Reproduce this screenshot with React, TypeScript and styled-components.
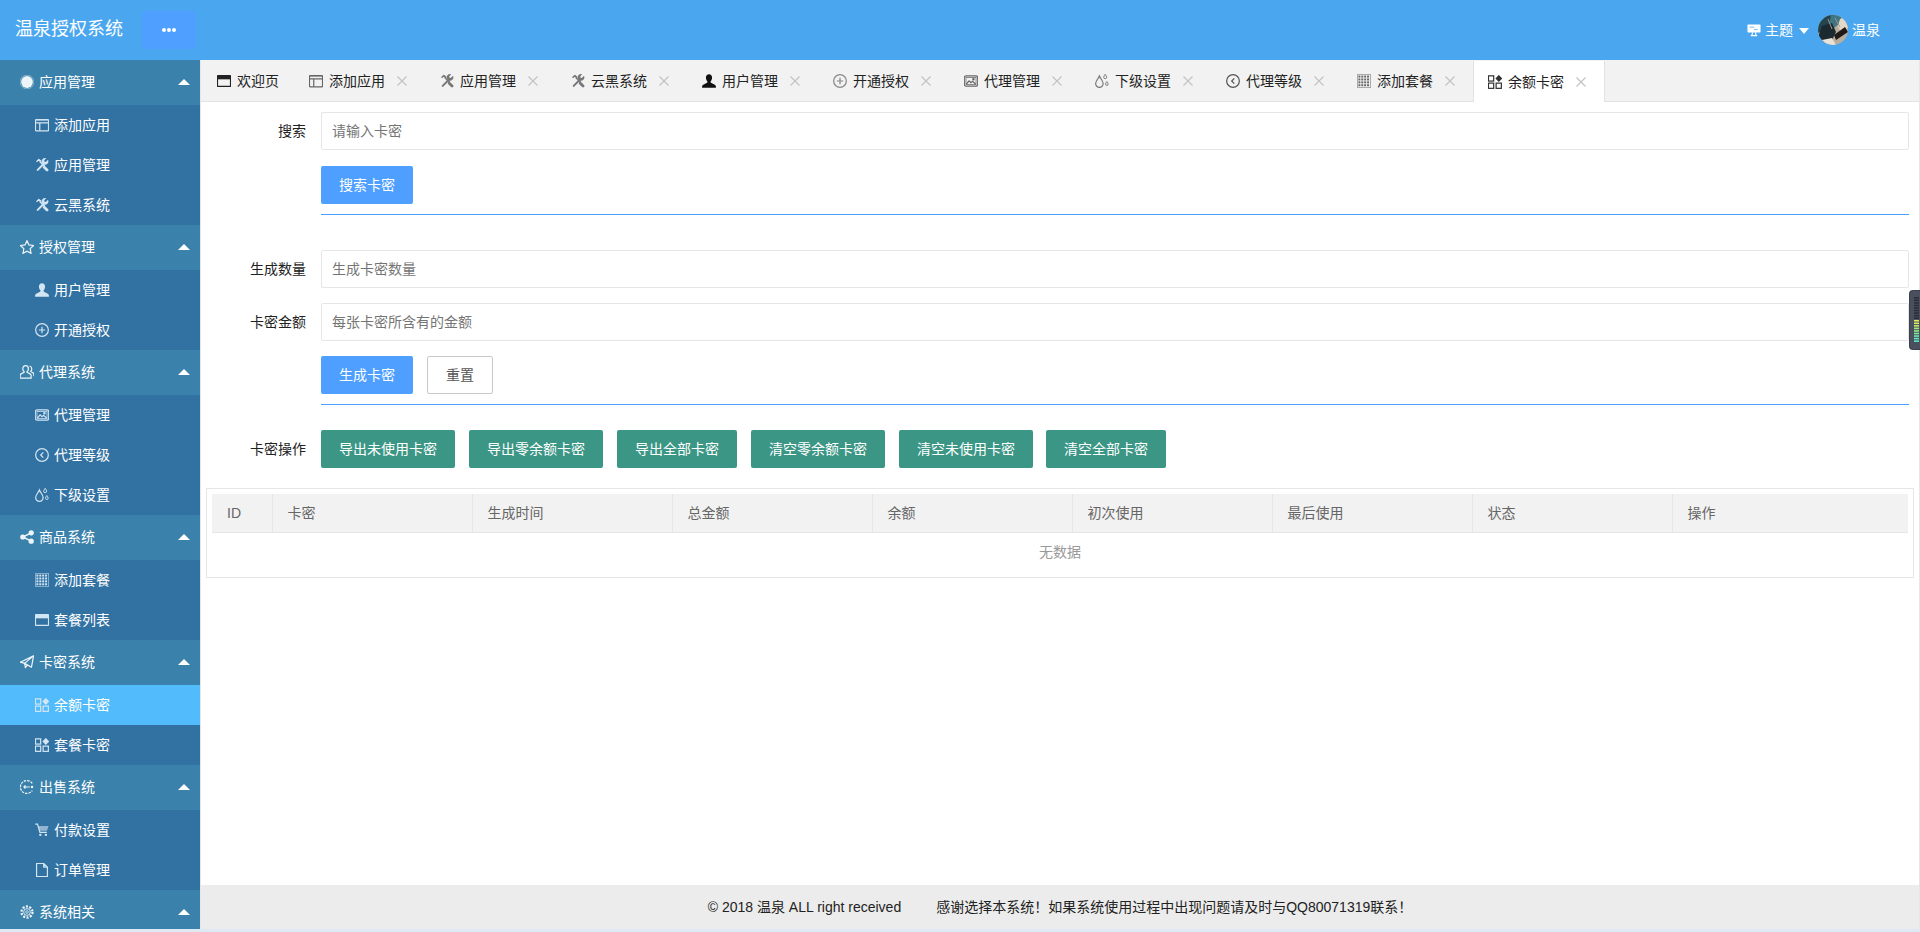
import React from "react";
import styled, { createGlobalStyle } from "styled-components";

const Global = createGlobalStyle`
  html, body { margin: 0; padding: 0; height: 932px; overflow: hidden; background: #dfe8f5; }
  body { font: 14px/20px "Liberation Sans", "Noto Sans CJK SC", sans-serif; color: #333; }
  * { box-sizing: border-box; }
  input::placeholder { color: #757575; opacity: 1; }
`;

type Kind =
  | "dot" | "window" | "browser" | "tools" | "star" | "user" | "plus" | "agents" | "picture"
  | "back" | "drops" | "share" | "grid" | "plane" | "apps" | "exit" | "cart" | "file" | "gear" | "board";

const Svg = styled.svg`
  flex: none;
  display: block;
  width: 14px;
  height: 14px;
`;

const gridCells: number[][] = [];
for (let r = 0; r < 4; r++) for (let c = 0; c < 4; c++) gridCells.push([2 + c * 3.1, 2.2 + r * 3.1]);

const Glyph = ({ kind }: { kind: Kind }) => {
  const stroke = { fill: "none", stroke: "currentColor", strokeWidth: 1.3 };
  let body: React.ReactNode = null;
  switch (kind) {
    case "tools":
      body = (
        <>
          <path d="M3.4 13.2l7.6-7.6" stroke="currentColor" strokeWidth="2.2" strokeLinecap="round" fill="none" />
          <path
            d="M14.2 2.6l-2.2 2.2-1.3-.4-.4-1.3L12.5.9a3.5 3.5 0 00-4.6 4.5l1.9 1.9a3.5 3.5 0 004.7-4.6z"
            fill="currentColor"
          />
          <path d="M2.2 4.6L4.6 2.2l2 1.6-.7.7 5 5" stroke="currentColor" strokeWidth="1.6" fill="none" strokeLinejoin="round" />
          <path d="M10.4 10.4l3 3" stroke="currentColor" strokeWidth="3" strokeLinecap="round" fill="none" />
        </>
      );
      break;
    case "dot":
      body = (
        <>
          <circle cx="8" cy="8" r="7.4" fill="none" stroke="currentColor" strokeOpacity=".45" strokeWidth="1" />
          <circle cx="8" cy="8" r="6.3" fill="currentColor" />
        </>
      );
      break;
    case "window":
      body = (
        <g {...stroke}>
          <rect x="1" y="2.2" width="14" height="12" rx=".6" />
          <path d="M1 5.8h14M5.6 5.8v8.4" />
          <path d="M1 3h14" strokeOpacity=".5" />
        </g>
      );
      break;
    case "browser":
      body = (
        <>
          <rect x="1" y="2.2" width="14" height="11.6" rx=".6" {...stroke} />
          <rect x="1" y="2.2" width="14" height="4" fill="currentColor" />
        </>
      );
      break;
    case "star":
      body = <path d="M8 1.2l2.1 4.6 4.9.6-3.6 3.4.9 5L8 12.4l-4.3 2.4.9-5L1 6.4l4.9-.6z" {...stroke} />;
      break;
    case "user":
      body = (
        <path
          d="M8 .8c2 0 3.3 1.5 3.3 3.7 0 1.6-.8 3-1.5 3.9-.3.4-.2 1.1.3 1.4l4.1 2.2c.8.4 1.2 1 1.2 1.8v1.4H.6v-1.4c0-.8.4-1.4 1.2-1.8l4.1-2.2c.5-.3.6-1 .3-1.4-.7-.9-1.5-2.3-1.5-3.9C4.7 2.3 6 .8 8 .8z"
          fill="currentColor"
        />
      );
      break;
    case "plus":
      body = (
        <g {...stroke}>
          <circle cx="8" cy="8" r="6.8" />
          <path d="M8 4.6v6.8M4.6 8h6.8" />
        </g>
      );
      break;
    case "agents":
      body = (
        <g {...stroke}>
          <path d="M6.5 1.2c1.9 0 3 1.4 3 3.2 0 1.3-.6 2.5-1.3 3.1-.3.3-.2.8.2 1l3 1.5c.7.4 1 .9 1 1.7v2.9H.6v-2.9c0-.8.3-1.3 1-1.7l3-1.5c.4-.2.5-.7.2-1-.7-.6-1.3-1.8-1.3-3.1 0-1.8 1.1-3.2 3-3.2z" />
          <path d="M10.8 1.6c1.6.4 2.3 1.6 2.3 3 0 1.2-.5 2.2-1.1 2.8l2.2 1.3c.7.4 1.2 1 1.2 1.9v2" />
        </g>
      );
      break;
    case "picture":
      body = (
        <g {...stroke}>
          <rect x=".8" y="2.4" width="14.4" height="11.2" rx="2" />
          <rect x="2.6" y="4.2" width="10.8" height="7.6" strokeWidth=".8" />
          <path d="M3 11.2l3-3.4 2 2 1.6-1.4 3.4 2.8" />
          <circle cx="10.6" cy="6.2" r=".7" />
        </g>
      );
      break;
    case "back":
      body = (
        <g {...stroke}>
          <circle cx="8" cy="8" r="6.8" />
          <path d="M9.4 5.2L6.6 8l2.8 2.8" />
        </g>
      );
      break;
    case "drops":
      body = (
        <g {...stroke}>
          <path d="M5.2 2.6c1.1 3 4 5 4 8.2a4 4 0 01-8 0c0-3.2 2.9-5.2 4-8.2z" />
          <path d="M11.4.8c.5 1.1 1.6 1.9 1.6 3.1a1.6 1.6 0 01-3.2 0c0-1.2 1.1-2 1.6-3.1z" strokeWidth="1" />
          <path d="M13.2 8.6c.5.9 1.4 1.7 1.4 2.8a1.4 1.4 0 01-2.8 0c0-1.1.9-1.9 1.4-2.8z" strokeWidth="1" />
        </g>
      );
      break;
    case "share":
      body = (
        <>
          <path d="M12.5 3.5L3.5 8l9 4.5" fill="none" stroke="currentColor" strokeWidth="1.6" />
          <circle cx="12.5" cy="3.5" r="2.8" fill="currentColor" />
          <circle cx="3.5" cy="8" r="2.8" fill="currentColor" />
          <circle cx="12.5" cy="12.5" r="2.8" fill="currentColor" />
        </>
      );
      break;
    case "grid":
      body = (
        <>
          <rect x="1" y="1" width="14" height="14" fill="none" stroke="currentColor" strokeOpacity=".55" strokeWidth="1" />
          {gridCells.map(([x, y]) => (
            <rect key={`${x}-${y}`} x={x} y={y} width="2.1" height="2.1" fill="currentColor" />
          ))}
        </>
      );
      break;
    case "plane":
      body = (
        <g {...stroke} strokeLinejoin="round">
          <path d="M15 1.4L.8 8.2l4.6 1.3L15 1.4z" />
          <path d="M15 1.4l-2.2 12.2-7.4-4.1.9 4.6 2.2-3" />
        </g>
      );
      break;
    case "apps":
      body = (
        <>
          <g {...stroke}>
            <rect x="1" y="1.4" width="5.6" height="5.6" />
            <rect x="1" y="9.2" width="5.6" height="5.6" />
            <rect x="9.2" y="9.2" width="5.6" height="5.6" />
          </g>
          <path d="M12.1.4l3.7 3.8-3.7 3.8-3.7-3.8z" fill="currentColor" />
        </>
      );
      break;
    case "exit":
      body = (
        <g {...stroke}>
          <path d="M13.6 4.2A6.9 6.9 0 1013.6 11.8" strokeWidth="1.3" strokeDasharray="2.6 1.1" />
          <path d="M4.4 8h6.6M4.4 8l2-1.6M4.4 8l2 1.6" />
          <circle cx="13.4" cy="8" r=".7" fill="currentColor" />
        </g>
      );
      break;
    case "cart":
      body = (
        <>
          <path d="M.8 1.6h2.4l2.6 9h7.4" {...stroke} />
          <path d="M4 3.6h11l-1.6 5.2H5.4z" fill="currentColor" fillOpacity=".6" />
          <circle cx="6.2" cy="13.2" r="1.3" fill="currentColor" />
          <circle cx="12.2" cy="13.2" r="1.3" fill="currentColor" />
        </>
      );
      break;
    case "file":
      body = <path d="M2.2 1h7.6l4 4v10H2.2zM9.8 1v4h4" {...stroke} strokeLinejoin="round" />;
      break;
    case "gear":
      body = (
        <g {...stroke}>
          <circle cx="8" cy="8" r="5.9" strokeWidth="2.4" strokeDasharray="2.2 1.5" />
          <circle cx="8" cy="8" r="3.6" strokeWidth="1" />
          <circle cx="8" cy="8" r="1.4" strokeWidth=".8" />
        </g>
      );
      break;
    case "board":
      body = (
        <>
          <rect x="1" y="2" width="14" height="8.6" rx=".8" fill="currentColor" />
          <path d="M3.4 5h5M8 7.4h4" stroke="#4aa7ef" strokeWidth=".8" />
          <path d="M6.6 10.6l-1 3.4M9.4 10.6l1 3.4M4.6 14h6.8" stroke="currentColor" strokeWidth="1.2" fill="none" />
        </>
      );
      break;
  }
  return <Svg viewBox="0.5 0.5 15 15">{body}</Svg>;
};

const Page = styled.div`
  width: 1920px;
  height: 929px;
  display: flex;
  flex-direction: column;
  overflow: hidden;
  position: relative;
`;

const TopBar = styled.header`
  flex: none;
  height: 60px;
  background: #4aa7ef;
  display: flex;
  align-items: center;
  padding: 0 40px 0 15px;
  color: #fff;
`;

const Brand = styled.div`
  font-size: 18px;
  line-height: 24px;
  width: 108px;
  white-space: nowrap;
  margin-top: -2px;
`;

const MenuToggle = styled.button`
  width: 54px;
  height: 38px;
  margin-left: 19px;
  border: none;
  border-radius: 2px;
  background: #4e9fff;
  display: flex;
  align-items: center;
  justify-content: center;
  gap: 1px;
  padding: 0;
`;

const Pip = styled.span`
  width: 4px;
  height: 4px;
  border-radius: 50%;
  background: #fff;
`;

const UserArea = styled.div`
  margin-left: auto;
  display: flex;
  align-items: center;
  font-size: 14px;
  white-space: nowrap;
`;

const ThemeLabel = styled.span`
  margin-left: 4px;
`;

const DownCaret = styled.i`
  width: 0;
  height: 0;
  margin: 2px 9px 0 6px;
  border-left: 5px solid transparent;
  border-right: 5px solid transparent;
  border-top: 6px solid #fff;
`;

const AvatarSvg = styled.svg`
  width: 30px;
  height: 30px;
  margin-right: 4px;
  display: block;
  border-radius: 50%;
`;

const Avatar = () => (
  <AvatarSvg viewBox="0 0 30 30">
    <rect width="30" height="30" fill="#b9ae9e" />
    <path d="M0 0h17l-3 9-6 6-8 3z" fill="#24444e" />
    <path d="M13 0h11l-2 8-6 5-5-3z" fill="#3f7684" />
    <path d="M4 11l10-3 4 9-4 8-9 3-5-6z" fill="#1b2a30" />
    <path d="M22 4l8-2v11l-7 4-3-6z" fill="#e3d8ca" />
    <path d="M16 20l11-8 3 5-12 8z" fill="#1f1a18" />
    <path d="M4 25l10-2 4 7H4z" fill="#e9e2d6" />
    <path d="M17 3l5 9M10 4l4 10" stroke="#a5958a" strokeWidth="1" />
  </AvatarSvg>
);

const Body = styled.div`
  flex: 1;
  min-height: 0;
  display: flex;
`;

const Sidebar = styled.nav`
  flex: none;
  width: 200px;
  background: #3272a3;
  overflow: hidden;
  color: #fff;
`;

const GroupHead = styled.div`
  height: 45px;
  background: #3a81ab;
  display: flex;
  align-items: center;
  gap: 5px;
  padding: 0 10px 1px 20px;
  color: #fff;
`;

const GroupIcon = styled.span`
  color: #eef5fa;
  display: block;
`;

const UpCaret = styled.i`
  margin-left: auto;
  width: 0;
  height: 0;
  border-left: 6px solid transparent;
  border-right: 6px solid transparent;
  border-bottom: 6px solid #fff;
`;

const SubList = styled.div`
  background: #3272a3;
  border-radius: 2px;
`;

const SubItem = styled.div<{ $active?: boolean }>`
  height: 40px;
  display: flex;
  align-items: center;
  gap: 5px;
  padding-left: 35px;
  background: ${(p) => (p.$active ? "#51bbfb" : "transparent")};
  color: #fff;
`;

const SubIcon = styled.span`
  color: #d2e5f2;
  display: block;
`;

const Main = styled.main`
  flex: 1;
  min-width: 0;
  background: #fff;
  border-left: 1px solid #e6e6e6;
  border-right: 1px solid #e6e6e6;
  display: flex;
  flex-direction: column;
  position: relative;
`;

const TabBar = styled.div`
  flex: none;
  height: 42px;
  background: #f2f2f2;
  border-bottom: 1px solid #e2e2e2;
  display: flex;
  padding-left: 1px;
  padding-top: 1px;
`;

const Tab = styled.div<{ $active?: boolean; $first?: boolean }>`
  width: ${(p) => (p.$first ? 92 : p.$active ? 132 : 131)}px;
  height: ${(p) => (p.$active ? 41 : 40)}px;
  display: flex;
  align-items: center;
  padding-left: 15px;
  color: #222;
  background: ${(p) => (p.$active ? "#fff" : "transparent")};
  box-shadow: ${(p) => (p.$active ? "inset 1px 0 #e2e2e2, inset -1px 0 #e2e2e2" : "none")};
  white-space: nowrap;
`;

const TabIcon = styled.span<{ $tone: string }>`
  color: ${(p) => p.$tone};
  display: block;
  margin-right: 6px;
`;

const CloseMark = styled.svg`
  width: 10px;
  height: 10px;
  margin-left: 12px;
  display: block;
  flex: none;
`;

const Content = styled.div`
  flex: 1;
  min-height: 0;
  padding: 10px 10px 0 0;
  display: flex;
  flex-direction: column;
`;

const Row = styled.div<{ $after?: number }>`
  display: flex;
  align-items: center;
  margin-bottom: ${(p) => p.$after ?? 15}px;
`;

const Label = styled.label`
  flex: none;
  width: 120px;
  padding-right: 15px;
  text-align: right;
  color: #222;
`;

const Indent = styled.div`
  flex: none;
  width: 120px;
`;

const Field = styled.input`
  flex: 1;
  min-width: 0;
  height: 38px;
  border: 1px solid #e6e6e6;
  border-radius: 2px;
  padding: 0 10px;
  background: #fff;
  font: inherit;
  color: #333;
  outline: none;
`;

const Buttons = styled.div`
  display: flex;
  gap: 14px;
`;

const OpButtons = styled(Buttons)`
  & > button:last-child {
    margin-left: -1px;
  }
`;

const Btn = styled.button<{ $tone?: "blue" | "green" | "plain" }>`
  height: 38px;
  padding: 0 18px;
  border-radius: 2px;
  font: inherit;
  white-space: nowrap;
  border: ${(p) => (p.$tone === "plain" ? "1px solid #c9c9c9" : "none")};
  background: ${(p) => (p.$tone === "plain" ? "#fff" : p.$tone === "green" ? "#3b9685" : "#4e9fff")};
  color: ${(p) => (p.$tone === "plain" ? "#555" : "#fff")};
`;

const Rule = styled.hr<{ $after: number }>`
  height: 1px;
  margin: -5px 0 ${(p) => p.$after}px 120px;
  border: none;
  background: #4e9fff;
`;

const TableBox = styled.div`
  margin: 5px -5px 0 5px;
  border: 1px solid #e6e6e6;
  padding: 5px 5px 0;
  height: 90px;
`;

const DataTable = styled.table`
  width: 100%;
  table-layout: fixed;
  border-collapse: collapse;
`;

const Th = styled.th<{ $w?: number }>`
  width: ${(p) => (p.$w ? `${p.$w}px` : "auto")};
  height: 38px;
  padding: 0 15px;
  text-align: left;
  font-weight: 400;
  color: #666;
  background: #f2f2f2;
  border-bottom: 1px solid #e6e6e6;
  border-left: 1px solid #e6e6e6;
  &:first-child {
    border-left: none;
  }
`;

const Empty = styled.td`
  height: 40px;
  text-align: center;
  color: #999;
`;

const Foot = styled.footer`
  flex: none;
  height: 44px;
  background: #ececec;
  display: flex;
  align-items: center;
  justify-content: center;
  gap: 35px;
  color: #222;
  margin-right: 0;
  font-size: 14px;
  white-space: nowrap;
`;

const Meter = styled.div`
  position: absolute;
  top: 231px;
  right: -1px;
  width: 10px;
  height: 58px;
  background: #4a4f5e;
  border-radius: 3px 0 0 3px;
  box-shadow: 0 0 0 1px #3c404c;
  padding: 6px 0 0 4px;
`;

const MeterBars = styled.svg`
  display: block;
  width: 5px;
  height: 46px;
`;

const meterColors = [
  "#2b2e38", "#2b2e38", "#2b2e38", "#2b2e38", "#2b2e38", "#2b2e38", "#2b2e38", "#2b2e38", "#2b2e38",
  "#e6e85a", "#d8ea60", "#c4ea6a", "#a8ea78", "#92ea88", "#7cea98", "#6aeaa8", "#5ceab8", "#52eac4",
];

const menu: { title: string; icon: Kind; items: { label: string; icon: Kind; active?: boolean }[] }[] = [
  {
    title: "应用管理",
    icon: "dot",
    items: [
      { label: "添加应用", icon: "window" },
      { label: "应用管理", icon: "tools" },
      { label: "云黑系统", icon: "tools" },
    ],
  },
  {
    title: "授权管理",
    icon: "star",
    items: [
      { label: "用户管理", icon: "user" },
      { label: "开通授权", icon: "plus" },
    ],
  },
  {
    title: "代理系统",
    icon: "agents",
    items: [
      { label: "代理管理", icon: "picture" },
      { label: "代理等级", icon: "back" },
      { label: "下级设置", icon: "drops" },
    ],
  },
  {
    title: "商品系统",
    icon: "share",
    items: [
      { label: "添加套餐", icon: "grid" },
      { label: "套餐列表", icon: "browser" },
    ],
  },
  {
    title: "卡密系统",
    icon: "plane",
    items: [
      { label: "余额卡密", icon: "apps", active: true },
      { label: "套餐卡密", icon: "apps" },
    ],
  },
  {
    title: "出售系统",
    icon: "exit",
    items: [
      { label: "付款设置", icon: "cart" },
      { label: "订单管理", icon: "file" },
    ],
  },
  { title: "系统相关", icon: "gear", items: [] },
];

const tabs: { label: string; icon: Kind; tone: string; first?: boolean; active?: boolean }[] = [
  { label: "欢迎页", icon: "browser", tone: "#222", first: true },
  { label: "添加应用", icon: "window", tone: "#666" },
  { label: "应用管理", icon: "tools", tone: "#777" },
  { label: "云黑系统", icon: "tools", tone: "#777" },
  { label: "用户管理", icon: "user", tone: "#111" },
  { label: "开通授权", icon: "plus", tone: "#888" },
  { label: "代理管理", icon: "picture", tone: "#666" },
  { label: "下级设置", icon: "drops", tone: "#777" },
  { label: "代理等级", icon: "back", tone: "#555" },
  { label: "添加套餐", icon: "grid", tone: "#666" },
  { label: "余额卡密", icon: "apps", tone: "#333", active: true },
];

const columns = ["ID", "卡密", "生成时间", "总金额", "余额", "初次使用", "最后使用", "状态", "操作"];
const actions = ["导出未使用卡密", "导出零余额卡密", "导出全部卡密", "清空零余额卡密", "清空未使用卡密", "清空全部卡密"];

export default function App() {
  return (
    <Page>
      <Global />
      <TopBar>
        <Brand>温泉授权系统</Brand>
        <MenuToggle aria-label="menu">
          <Pip />
          <Pip />
          <Pip />
        </MenuToggle>
        <UserArea>
          <Glyph kind="board" />
          <ThemeLabel>主题</ThemeLabel>
          <DownCaret />
          <Avatar />
          <span>温泉</span>
        </UserArea>
      </TopBar>
      <Body>
        <Sidebar>
          {menu.map((g) => (
            <div key={g.title}>
              <GroupHead>
                <GroupIcon>
                  <Glyph kind={g.icon} />
                </GroupIcon>
                {g.title}
                <UpCaret />
              </GroupHead>
              {g.items.length > 0 && (
                <SubList>
                  {g.items.map((it) => (
                    <SubItem key={it.label} $active={it.active}>
                      <SubIcon>
                        <Glyph kind={it.icon} />
                      </SubIcon>
                      {it.label}
                    </SubItem>
                  ))}
                </SubList>
              )}
            </div>
          ))}
        </Sidebar>
        <Main>
          <TabBar>
            {tabs.map((t) => (
              <Tab key={t.label} $first={t.first} $active={t.active}>
                <TabIcon $tone={t.tone}>
                  <Glyph kind={t.icon} />
                </TabIcon>
                {t.label}
                {!t.first && (
                  <CloseMark viewBox="0 0 10 10">
                    <path d="M.5.5l9 9M9.5.5l-9 9" stroke="#c2c2c2" strokeWidth="1.1" fill="none" />
                  </CloseMark>
                )}
              </Tab>
            ))}
          </TabBar>
          <Content>
            <Row $after={16}>
              <Label>搜索</Label>
              <Field placeholder="请输入卡密" />
            </Row>
            <Row>
              <Indent />
              <Btn $tone="blue">搜索卡密</Btn>
            </Row>
            <Rule $after={35} />
            <Row>
              <Label>生成数量</Label>
              <Field placeholder="生成卡密数量" />
            </Row>
            <Row>
              <Label>卡密金额</Label>
              <Field placeholder="每张卡密所含有的金额" />
            </Row>
            <Row>
              <Indent />
              <Buttons>
                <Btn $tone="blue">生成卡密</Btn>
                <Btn $tone="plain">重置</Btn>
              </Buttons>
            </Row>
            <Rule $after={25} />
            <Row>
              <Label>卡密操作</Label>
              <OpButtons>
                {actions.map((a) => (
                  <Btn key={a} $tone="green">
                    {a}
                  </Btn>
                ))}
              </OpButtons>
            </Row>
            <TableBox>
              <DataTable>
                <thead>
                  <tr>
                    {columns.map((c, i) => (
                      <Th key={c} $w={i === 0 ? 60 : i === columns.length - 1 ? undefined : 200}>
                        {c}
                      </Th>
                    ))}
                  </tr>
                </thead>
                <tbody>
                  <tr>
                    <Empty colSpan={columns.length}>无数据</Empty>
                  </tr>
                </tbody>
              </DataTable>
            </TableBox>
          </Content>
          <Foot>
            <span>© 2018 温泉 ALL right received</span>
            <span>感谢选择本系统！如果系统使用过程中出现问题请及时与QQ80071319联系！</span>
          </Foot>
          <Meter>
            <MeterBars viewBox="0 0 5 46">
              {meterColors.map((c, i) => (
                <rect key={i} x="0" y={i * 2.55} width="5" height="1.6" fill={c} />
              ))}
            </MeterBars>
          </Meter>
        </Main>
      </Body>
    </Page>
  );
}
